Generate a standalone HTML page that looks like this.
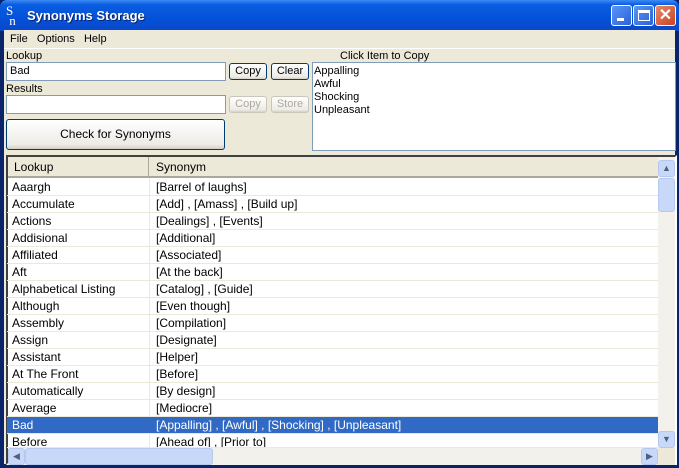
<!DOCTYPE html>
<html><head><style>
*{margin:0;padding:0;box-sizing:border-box}
body{width:679px;height:468px;overflow:hidden;background:#0a246a;font-family:"Liberation Sans",sans-serif;font-size:11px;position:relative}
.a{position:absolute}
#title{left:0;top:0;width:679px;height:31px;background:linear-gradient(#3d8af7,#0a5de0 15%,#0451d9 60%,#0a48c8);border-radius:7px 7px 0 0}
#frame{left:4px;top:30px;width:671px;height:434px;background:#ece9d8}
.tb{top:5px;width:21px;height:21px;border:1px solid #fff;border-radius:3px;background:linear-gradient(135deg,#5a95f8,#2963d8)}
.inp{background:#fff;border:1px solid #7f9db9;height:19px;font-size:11px;padding:2px 3px}
.btn{border:1px solid #003c74;border-radius:3px;background:linear-gradient(#fff,#ecebe6 85%,#d6d0c5);font-size:11px;text-align:center;line-height:15px;height:17px}
.dis{border-color:#c9c7ba;color:#aca899}
.row{position:absolute;left:7px;width:651px;height:17px;font-size:12px;line-height:17px;border-bottom:1px solid #ece9d8}
.row span{position:absolute;left:5px}
.row span+span{left:149px}
</style></head><body>
<div id="title" class="a">
<div class="a" style="left:6px;top:6px;color:#fff;font-family:'Liberation Serif',serif;font-size:13px;line-height:10px">S<br>&nbsp;n</div>
<div class="a" style="left:27px;top:8px;color:#fff;font-weight:bold;font-size:13px;text-shadow:1px 1px #0a246a">Synonyms Storage</div>
<div class="a tb" style="left:611px"><div class="a" style="left:5px;top:12px;width:7px;height:3px;background:#fff"></div></div>
<div class="a tb" style="left:633px"><div class="a" style="left:4px;top:4px;width:12px;height:11px;border:1px solid #fff;border-top-width:3px"></div></div>
<div class="a tb" style="left:655px;background:linear-gradient(135deg,#e8886a,#c8441e);color:#fff;font-size:16px;font-weight:bold;text-align:center;line-height:19px">✕</div>
</div>
<div id="frame" class="a"></div>
<div class="a" style="left:10px;top:33px;font-size:11px">File&nbsp;&nbsp;&nbsp;Options&nbsp;&nbsp;&nbsp;Help</div>
<div class="a" style="left:4px;top:48px;width:671px;height:1px;background:#fff"></div>
<div class="a" style="left:6px;top:50px">Lookup</div>
<div class="a inp" style="left:6px;top:62px;width:220px">Bad</div>
<div class="a btn" style="left:229px;top:63px;width:38px">Copy</div>
<div class="a btn" style="left:271px;top:63px;width:38px">Clear</div>
<div class="a" style="left:6px;top:83px">Results</div>
<div class="a inp" style="left:6px;top:95px;width:220px"></div>
<div class="a btn dis" style="left:229px;top:96px;width:38px">Copy</div>
<div class="a btn dis" style="left:271px;top:96px;width:38px">Store</div>
<div class="a btn" style="left:6px;top:119px;width:219px;height:31px;line-height:29px;font-size:12px">Check for Synonyms</div>
<div class="a" style="left:340px;top:50px">Click Item to Copy</div>
<div class="a" style="left:312px;top:62px;width:364px;height:89px;background:#fff;border:1px solid #7f9db9;padding:2px 1px;line-height:13px">Appalling<br>Awful<br>Shocking<br>Unpleasant</div>
<div class="a" style="left:6px;top:155px;width:671px;height:310px;background:#fff;border:2px solid #404040;border-right-color:#fff;border-bottom-color:#fff"></div>
<div class="a" style="left:8px;top:157px;width:650px;height:21px;background:#ece9d8;border-bottom:2px solid #aca899;font-size:12px;line-height:20px">
<span class="a" style="left:6px">Lookup</span><span class="a" style="left:148px">Synonym</span>
<div class="a" style="left:140px;top:0;width:1px;height:19px;background:#aca899"></div></div>
<div class="a" style="left:149px;top:178px;width:1px;height:270px;background:#ece9d8"></div>
<div class="row" style="top:179px"><span>Aaargh</span><span>[Barrel of laughs]</span></div>
<div class="row" style="top:196px"><span>Accumulate</span><span>[Add] , [Amass] , [Build up]</span></div>
<div class="row" style="top:213px"><span>Actions</span><span>[Dealings] , [Events]</span></div>
<div class="row" style="top:230px"><span>Addisional</span><span>[Additional]</span></div>
<div class="row" style="top:247px"><span>Affiliated</span><span>[Associated]</span></div>
<div class="row" style="top:264px"><span>Aft</span><span>[At the back]</span></div>
<div class="row" style="top:281px"><span>Alphabetical Listing</span><span>[Catalog] , [Guide]</span></div>
<div class="row" style="top:298px"><span>Although</span><span>[Even though]</span></div>
<div class="row" style="top:315px"><span>Assembly</span><span>[Compilation]</span></div>
<div class="row" style="top:332px"><span>Assign</span><span>[Designate]</span></div>
<div class="row" style="top:349px"><span>Assistant</span><span>[Helper]</span></div>
<div class="row" style="top:366px"><span>At The Front</span><span>[Before]</span></div>
<div class="row" style="top:383px"><span>Automatically</span><span>[By design]</span></div>
<div class="row" style="top:400px"><span>Average</span><span>[Mediocre]</span></div>
<div class="row" style="top:417px;background:#316ac5;color:#fff"><span>Bad</span><span>[Appalling] , [Awful] , [Shocking] , [Unpleasant]</span></div>
<div class="row" style="top:434px;height:14px;overflow:hidden"><span>Before</span><span>[Ahead of] , [Prior to]</span></div>
<div class="a" style="left:658px;top:157px;width:17px;height:291px;background:#f3f1ec"></div>
<div class="a btn" style="left:658px;top:160px;width:17px;height:17px;border-color:#b5c8f0;background:#c8d8f8;color:#4d6185;font-size:9px">▲</div>
<div class="a btn" style="left:658px;top:178px;width:17px;height:34px;border-color:#b5c8f0;background:#c8d8f8"></div>
<div class="a btn" style="left:658px;top:431px;width:17px;height:17px;border-color:#b5c8f0;background:#c8d8f8;color:#4d6185;font-size:9px">▼</div>
<div class="a" style="left:8px;top:448px;width:650px;height:17px;background:#f3f1ec"></div>
<div class="a btn" style="left:8px;top:448px;width:17px;height:17px;border-color:#b5c8f0;background:#c8d8f8;color:#4d6185;font-size:9px">◀</div>
<div class="a btn" style="left:25px;top:448px;width:188px;height:17px;border-color:#b5c8f0;background:#c8d8f8"></div>
<div class="a btn" style="left:641px;top:448px;width:17px;height:17px;border-color:#b5c8f0;background:#c8d8f8;color:#4d6185;font-size:9px">▶</div>
<div class="a" style="left:658px;top:448px;width:17px;height:17px;background:#ece9d8"></div>
</body></html>
